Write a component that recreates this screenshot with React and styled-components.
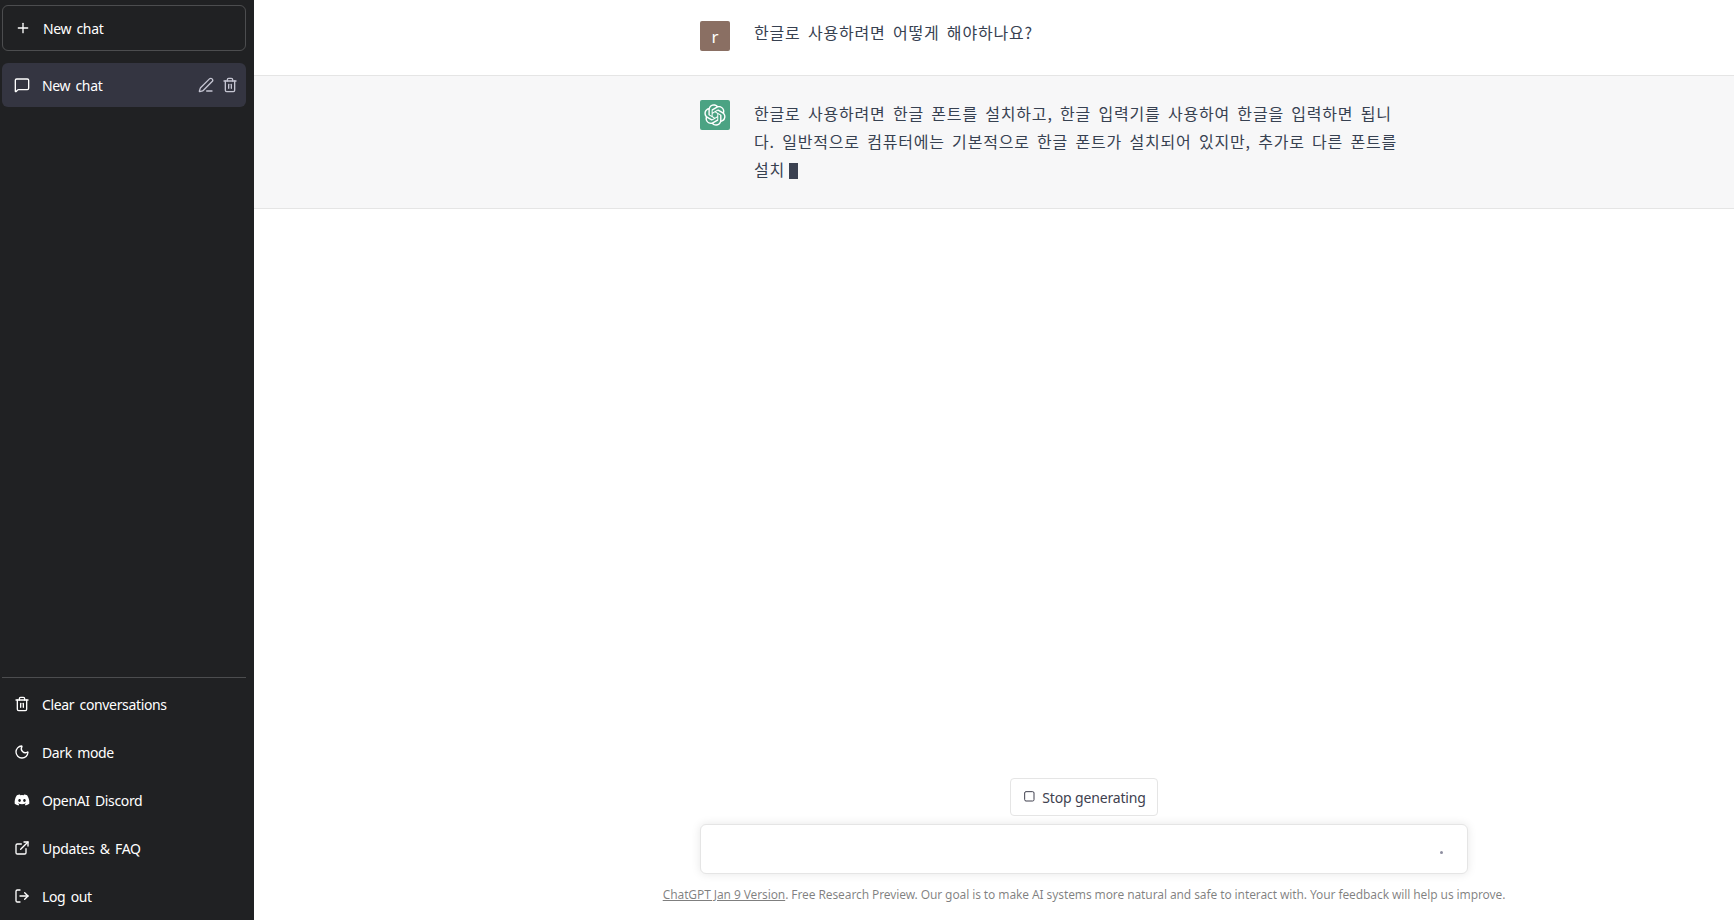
import styled, { createGlobalStyle } from "styled-components";
import { FaDiscord } from "react-icons/fa";
import {
  ExternalLink,
  LogOut,
  MessageSquare,
  Moon,
  PenLine,
  Plus,
  Trash2,
} from "lucide-react";

const GlobalStyle = createGlobalStyle`
  html, body {
    margin: 0;
    padding: 0;
    height: 100%;
    background: #fff;
    font-family: "Noto Sans", "Noto Sans CJK KR", sans-serif;
  }
  * {
    box-sizing: border-box;
  }
`;

const Page = styled.div`
  display: flex;
  width: 100vw;
  height: 100vh;
  overflow: hidden;
`;

const Sidebar = styled.aside`
  display: flex;
  flex-direction: column;
  flex: 0 0 254px;
  padding: 5px 8px 0 2px;
  background: #202123;
  color: #fff;
  font-size: 14px;
  letter-spacing: -0.35px;
  word-spacing: 2px;
`;

const NewChatButton = styled.div`
  display: flex;
  align-items: center;
  gap: 12px;
  height: 46px;
  padding: 0 12px;
  border: 1px solid rgba(255, 255, 255, 0.2);
  border-radius: 6px;
  margin-bottom: 12px;
`;

const ChatList = styled.div`
  flex: 1;
`;

const ChatRow = styled.div`
  display: flex;
  align-items: center;
  gap: 12px;
  height: 44px;
  padding: 0 8px 0 12px;
  border-radius: 6px;
  background: #343541;
`;

const ChatTitle = styled.span`
  flex: 1;
`;

const RowActions = styled.div`
  display: flex;
  gap: 8px;
  color: #c5c5d2;
`;

const BottomMenu = styled.div`
  border-top: 1px solid rgba(255, 255, 255, 0.2);
  padding-top: 2px;
`;

const MenuItem = styled.div`
  display: flex;
  align-items: center;
  gap: 12px;
  height: 48px;
  padding: 0 12px;
`;

const Main = styled.main`
  display: flex;
  flex-direction: column;
  flex: 1;
  min-width: 0;
`;

const Thread = styled.div`
  flex: 1;
`;

// 180px on the left: the column sits right of the middle of the panel
const MessageRow = styled.div`
  padding: ${(p) => (p.$bot ? "24px 0 24px 180px" : "21px 0 24px 180px")};
  background: ${(p) => (p.$bot ? "#f7f7f8" : "#fff")};
  border-bottom: 1px solid #e5e5e5;
`;

const MessageInner = styled.div`
  display: flex;
  gap: 24px;
  width: 768px;
  margin: 0 auto;
`;

const Avatar = styled.div`
  display: flex;
  align-items: center;
  justify-content: center;
  flex: 0 0 30px;
  width: 30px;
  height: 30px;
  border-radius: 2px;
  background: ${(p) => p.$color};
  color: #fff;
  font-size: 17px;
`;

const MessageText = styled.div`
  width: 648px;
  margin-top: ${(p) => p.$offset}px;
  margin-bottom: ${(p) => (p.$bot ? 1 : 0)}px;
  color: #374151;
  font-family: "Noto Sans CJK KR", sans-serif;
  font-size: 16px;
  line-height: 28px;
  letter-spacing: 0.8px;
  word-spacing: 3px;
  word-break: break-all;
`;

const Cursor = styled.span`
  display: inline-block;
  width: 9px;
  height: 16px;
  margin-left: 4px;
  background: #3b4151;
  vertical-align: -3px;
`;

const Bottom = styled.div`
  display: flex;
  flex-direction: column;
  align-items: center;
  padding-left: 180px;
`;

const StopButton = styled.div`
  display: flex;
  align-items: center;
  gap: 4px;
  height: 38px;
  padding: 0 11px;
  border: 1px solid #e5e5e5;
  border-radius: 4px;
  margin-bottom: 8px;
  color: #40414f;
  font-size: 14px;
  letter-spacing: -0.15px;
`;

const StopIcon = styled.svg`
  width: 16px;
  height: 16px;
`;

const InputBox = styled.div`
  position: relative;
  width: 768px;
  height: 50px;
  border: 1px solid #e5e5e5;
  border-radius: 6px;
  background: #fff;
  box-shadow: 0 0 10px rgba(0, 0, 0, 0.1);
`;

const Dot = styled.span`
  position: absolute;
  right: 24px;
  top: 26px;
  width: 3px;
  height: 3px;
  border-radius: 50%;
  background: #8e8ea0;
`;

const Footer = styled.div`
  padding: 13px 0 17px;
  color: rgba(0, 0, 0, 0.5);
  font-size: 12px;
  line-height: 16px;
  letter-spacing: -0.1px;
`;

const FooterLink = styled.span`
  text-decoration: underline;
`;

const OpenAILogo = () => (
  <svg width="22" height="22" viewBox="0 0 41 41" fill="none">
    <path
      fill="currentColor"
      d="M37.5324 16.8707C37.9808 15.5241 38.1363 14.0974 37.9886 12.6859C37.8409 11.2744 37.3934 9.91076 36.676 8.68622C35.6126 6.83404 33.9882 5.3676 32.0373 4.4985C30.0864 3.62941 27.9098 3.40259 25.8215 3.85078C24.8796 2.7893 23.7219 1.94125 22.4257 1.36341C21.1295 0.785575 19.7249 0.491269 18.3058 0.500197C16.1708 0.495044 14.0893 1.16803 12.3614 2.42214C10.6335 3.67624 9.34853 5.44666 8.6917 7.47815C7.30085 7.76286 5.98686 8.3414 4.8377 9.17505C3.68854 10.0087 2.73073 11.0782 2.02839 12.312C0.956464 14.1591 0.498905 16.2988 0.721698 18.4228C0.944492 20.5467 1.83612 22.5449 3.268 24.1293C2.81966 25.4759 2.66413 26.9026 2.81182 28.3141C2.95951 29.7256 3.40701 31.0892 4.12437 32.3138C5.18791 34.1659 6.8123 35.6322 8.76321 36.5013C10.7141 37.3704 12.8907 37.5973 14.9789 37.1492C15.9208 38.2107 17.0786 39.0587 18.3747 39.6366C19.6709 40.2144 21.0755 40.5087 22.4946 40.4998C24.6307 40.5054 26.7133 39.8321 28.4418 38.5772C30.1704 37.3223 31.4556 35.5506 32.1119 33.5179C33.5027 33.2332 34.8167 32.6547 35.9659 31.821C37.115 30.9874 38.0728 29.9178 38.7752 28.684C39.8458 26.8371 40.3023 24.6979 40.0789 22.5748C39.8556 20.4517 38.9639 18.4544 37.5324 16.8707ZM22.4978 37.8849C20.7443 37.8874 19.0459 37.2733 17.6994 36.1501C17.7601 36.117 17.8666 36.0586 17.936 36.0161L25.9004 31.4156C26.1003 31.3019 26.2663 31.137 26.3813 30.9378C26.4964 30.7386 26.5563 30.5124 26.5549 30.2825V19.0542L29.9213 20.998C29.9389 21.0068 29.9541 21.0198 29.9656 21.0359C29.977 21.052 29.9842 21.0707 29.9867 21.0902V30.3889C29.9842 32.375 29.1946 34.2791 27.7909 35.6841C26.3872 37.0892 24.4838 37.8806 22.4978 37.8849ZM6.39227 31.0064C5.51397 29.4888 5.19742 27.7107 5.49804 25.9832C5.55718 26.0187 5.66048 26.0818 5.73461 26.1244L13.699 30.7248C13.8975 30.8408 14.1233 30.902 14.3532 30.902C14.583 30.902 14.8088 30.8408 15.0073 30.7248L24.731 25.1103V28.9979C24.7321 29.0177 24.7283 29.0376 24.7199 29.0556C24.7115 29.0736 24.6988 29.0893 24.6829 29.1012L16.6317 33.7497C14.9096 34.7416 12.8643 35.0097 10.9447 34.4954C9.02506 33.9811 7.38785 32.7263 6.39227 31.0064ZM4.29707 13.6194C5.17156 12.0998 6.55279 10.9364 8.19885 10.3327C8.19885 10.4013 8.19491 10.5228 8.19491 10.6071V19.808C8.19351 20.0378 8.25334 20.2638 8.36823 20.4629C8.48312 20.6619 8.64893 20.8267 8.84863 20.9404L18.5723 26.5542L15.206 28.4979C15.1894 28.5089 15.1703 28.5155 15.1505 28.5173C15.1307 28.5191 15.1107 28.516 15.0924 28.5082L7.04046 23.8557C5.32135 22.8601 4.06716 21.2235 3.55289 19.3046C3.03862 17.3858 3.30624 15.3413 4.29707 13.6194ZM31.955 20.0556L22.2312 14.4411L25.5976 12.4981C25.6142 12.4872 25.6333 12.4805 25.6531 12.4787C25.6729 12.4769 25.6928 12.4801 25.7111 12.4879L33.7631 17.1364C34.9967 17.849 36.0017 18.8982 36.6606 20.1613C37.3194 21.4244 37.6047 22.849 37.4832 24.2684C37.3617 25.6878 36.8382 27.0432 35.9743 28.1759C35.1103 29.3086 33.9415 30.1717 32.6047 30.6641C32.6047 30.5947 32.6047 30.4733 32.6047 30.3889V21.188C32.6066 20.9586 32.5474 20.7328 32.4332 20.5338C32.319 20.3348 32.154 20.1698 31.955 20.0556ZM35.3055 15.0128C35.2464 14.9765 35.1431 14.9142 35.069 14.8717L27.1045 10.2712C26.906 10.1554 26.6803 10.0943 26.4504 10.0943C26.2206 10.0943 25.9948 10.1554 25.7963 10.2712L16.0726 15.8858V11.9982C16.0715 11.9783 16.0753 11.9585 16.0837 11.9405C16.0921 11.9225 16.1048 11.9068 16.1207 11.8949L24.1719 7.25025C25.4053 6.53903 26.8158 6.19376 28.2383 6.25482C29.6608 6.31589 31.0364 6.78077 32.2044 7.59508C33.3723 8.40939 34.2842 9.53945 34.8334 10.8531C35.3826 12.1667 35.5464 13.6095 35.3055 15.0128ZM14.2424 21.9419L10.8752 19.9981C10.8576 19.9893 10.8423 19.9763 10.8309 19.9602C10.8195 19.9441 10.8122 19.9254 10.8098 19.9058V10.6071C10.8107 9.18295 11.2173 7.78848 11.9819 6.58696C12.7466 5.38544 13.8377 4.42659 15.1275 3.82264C16.4173 3.21869 17.8524 2.99464 19.2649 3.1767C20.6775 3.35876 22.0089 3.93941 23.1034 4.85067C23.0427 4.88379 22.937 4.94215 22.8668 4.98473L14.9024 9.58517C14.7025 9.69878 14.5366 9.86356 14.4215 10.0626C14.3065 10.2616 14.2466 10.4877 14.2479 10.7175L14.2424 21.9419ZM16.071 17.9991L20.4018 15.4978L24.7325 17.9975V22.9985L20.4018 25.4983L16.071 22.9985V17.9991Z"
    />
  </svg>
);

const menuItems = [
  { label: "Clear conversations", icon: <Trash2 size={16} /> },
  { label: "Dark mode", icon: <Moon size={16} /> },
  { label: "OpenAI Discord", icon: <FaDiscord size={16} /> },
  { label: "Updates & FAQ", icon: <ExternalLink size={16} /> },
  { label: "Log out", icon: <LogOut size={16} /> },
];

export default function App() {
  return (
    <Page>
      <GlobalStyle />
      <Sidebar>
        <NewChatButton>
          <Plus size={16} />
          New chat
        </NewChatButton>
        <ChatList>
          <ChatRow>
            <MessageSquare size={16} />
            <ChatTitle>New chat</ChatTitle>
            <RowActions>
              <PenLine size={16} />
              <Trash2 size={16} />
            </RowActions>
          </ChatRow>
        </ChatList>
        <BottomMenu>
          {menuItems.map((item) => (
            <MenuItem key={item.label}>
              {item.icon}
              {item.label}
            </MenuItem>
          ))}
        </BottomMenu>
      </Sidebar>
      <Main>
        <Thread>
          <MessageRow>
            <MessageInner>
              <Avatar $color="#8a6f63">r</Avatar>
              <MessageText $offset={-3}>한글로 사용하려면 어떻게 해야하나요?</MessageText>
            </MessageInner>
          </MessageRow>
          <MessageRow $bot>
            <MessageInner>
              <Avatar $color="#4ba383">
                <OpenAILogo />
              </Avatar>
              <MessageText $bot $offset={-1}>
                한글로 사용하려면 한글 폰트를 설치하고, 한글 입력기를 사용하여 한글을 입력하면 됩니다. 일반적으로 컴퓨터에는 기본적으로 한글 폰트가 설치되어 있지만, 추가로 다른 폰트를 설치
                <Cursor />
              </MessageText>
            </MessageInner>
          </MessageRow>
        </Thread>
        <Bottom>
          <StopButton>
            <StopIcon viewBox="0 0 24 24" fill="none" stroke="currentColor" strokeWidth="1.5">
              <rect x="4" y="4" width="14" height="14" rx="2" />
            </StopIcon>
            Stop generating
          </StopButton>
          <InputBox>
            <Dot />
          </InputBox>
          <Footer>
            <FooterLink>ChatGPT Jan 9 Version</FooterLink>. Free Research Preview. Our goal is to make AI systems more natural and safe to interact with. Your feedback will help us improve.
          </Footer>
        </Bottom>
      </Main>
    </Page>
  );
}
